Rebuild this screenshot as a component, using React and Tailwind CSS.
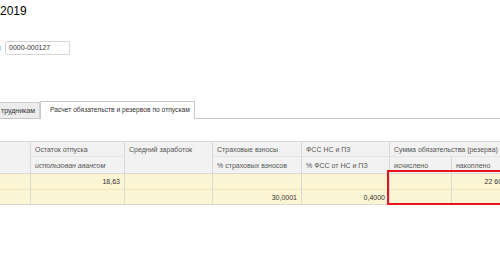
export default function App() {
  const f = { fontFamily: '"Liberation Sans", Arial, sans-serif' };
  const th = "border border-[#d9d9d9] bg-[#f2f2f2] text-[#555] font-normal text-left align-top px-[4px] pt-[3px] leading-[9px] whitespace-nowrap overflow-hidden";
  const td = "border-x border-[#d9d9d9] bg-[#fcf5d4] text-[#333] text-right px-[4px] leading-[9px] whitespace-nowrap";
  return (
    <div className="w-[500px] h-[259px] overflow-hidden bg-white text-[7px]" style={f}>
      <div className="h-[24px] pt-[5px] text-[12px] leading-[13px] text-black">2019</div>
      <div className="mt-[17px] flex items-center h-[14px]">
        <span className="text-[#4a90d9] text-[7px] -ml-[2px] w-[7px]">к</span>
        <div className="w-[65px] h-[14px] border border-[#d6d6d6] rounded-[2px] px-[3px] text-[7px] leading-[12px] text-[#333]">0000-000127</div>
      </div>
      <div className="mt-[46px] flex items-end h-[18px] border-b border-[#c8c8c8]">
        <div className="h-[16px] w-[41px] bg-[#ececec] border border-b-0 border-[#d0d0d0] text-[#333] leading-[15px] overflow-hidden whitespace-nowrap -ml-[1px] flex justify-end pr-[4px]">трудникам</div>
        <div className="h-[18px] w-[155px] bg-white border border-b-0 border-[#c8c8c8] -mb-[1px] text-[#333] text-[6.7px] leading-[16px] pl-[9px] whitespace-nowrap">Расчет обязательств и резервов по отпускам</div>
      </div>
      <div className="mt-[22px] w-[520px]">
        <table className="border-collapse table-fixed w-[520px] -ml-[1px]">
          <colgroup>
            <col className="w-[31px]" />
            <col className="w-[94px]" />
            <col className="w-[88px]" />
            <col className="w-[89px]" />
            <col className="w-[88px]" />
            <col className="w-[62px]" />
            <col className="w-[68px]" />
          </colgroup>
          <thead>
            <tr className="h-[15px]">
              <th rowSpan={2} className={th}></th>
              <th className={th + " border-b-[#e4e4e4]"}>Остаток отпуска</th>
              <th rowSpan={2} className={th}>Средний заработок</th>
              <th className={th + " border-b-[#e4e4e4]"}>Страховые взносы</th>
              <th className={th + " border-b-[#e4e4e4]"}>ФСС НС и ПЗ</th>
              <th colSpan={2} className={th + " border-b-[#e4e4e4]"}>Сумма обязательства (резерва)</th>
            </tr>
            <tr className="h-[17px]">
              <th className={th + " italic pt-[4px]"}>использован авансом</th>
              <th className={th + " pt-[4px]"}>% страховых взносов</th>
              <th className={th + " pt-[4px]"}>% ФСС от НС и ПЗ</th>
              <th className={th + " pt-[4px]"}>исчислено</th>
              <th className={th + " pt-[4px]"}>накоплено</th>
            </tr>
          </thead>
          <tbody>
            <tr className="h-[16px] border-b border-[#f0e6bd]">
              <td className={td}></td>
              <td className={td}>18,63</td>
              <td className={td}></td>
              <td className={td}></td>
              <td className={td}></td>
              <td className={td}></td>
              <td className={td + " pr-[13px]"}>22 602</td>
            </tr>
            <tr className="h-[15px] border-b border-[#d9d9d9]">
              <td className={td}></td>
              <td className={td}></td>
              <td className={td}></td>
              <td className={td}>30,0001</td>
              <td className={td}>0,4000</td>
              <td className={td}></td>
              <td className={td}></td>
            </tr>
          </tbody>
        </table>
        <div className="relative">
          <div className="absolute left-[387px] top-[-35px] w-[140px] h-[35px] border-2 border-[#e8141b] pointer-events-none"></div>
        </div>
      </div>
    </div>
  );
}
